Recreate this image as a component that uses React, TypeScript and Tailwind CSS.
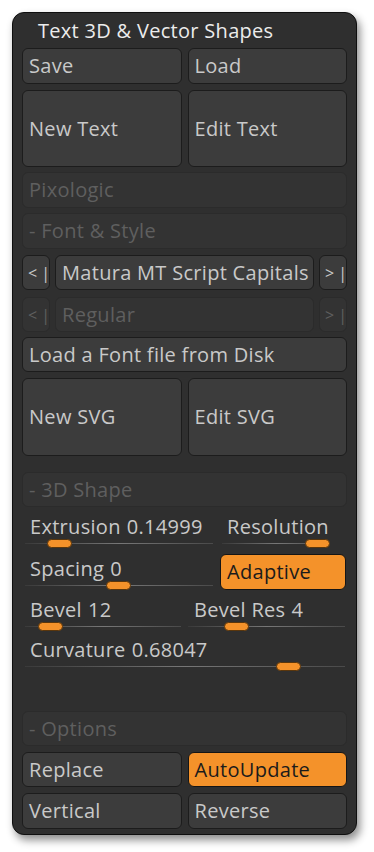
import React from 'react';

type BtnProps = {
  label: string;
  className?: string;
  dim?: boolean;
  on?: boolean;
  small?: boolean;
};

const Btn = ({ label, className = '', dim = false, on = false, small = false }: BtnProps) => {
  const tone = on
    ? 'bg-[#f4922a] border-[#151515] text-[#1b1b1b]'
    : dim
      ? 'bg-[#333333] border-[#2b2b2b] text-[#5f5f5f]'
      : 'bg-[#3c3c3c] border-[#1c1c1c] text-[#c9c9c9]';
  const size = small ? 'text-[16px] pl-[5px]' : 'text-[20px] tracking-[0.3px] pl-[6px]';
  return (
    <div
      className={`flex items-center overflow-hidden whitespace-nowrap rounded-[6px] border ${size} ${tone} ${className}`}
    >
      {label}
    </div>
  );
};

type SliderProps = {
  label: string;
  value?: string;
  width: number;
  pl: number;
  lineLeft: number;
  lineWidth: number;
  knob: number;
};

const Slider = ({ label, value, width, pl, lineLeft, lineWidth, knob }: SliderProps) => (
  <div className="flex flex-col shrink-0" style={{ width }}>
    <div className="h-[22px] leading-[22px] text-[20px] tracking-[0.3px] text-[#c9c9c9] whitespace-nowrap" style={{ paddingLeft: pl }}>
      {label}
      {value && <span className="ml-[6px]">{value}</span>}
    </div>
    <div className="relative h-[10px]">
      <div
        className="absolute top-[5px] h-px bg-gradient-to-r from-[#3a3a3a] via-[#777777] to-[#4a4a4a]"
        style={{ left: lineLeft, width: lineWidth }}
      />
      <div
        className="absolute top-px h-[9px] w-[25px] rounded-full border border-[#5a360c] bg-[#f4922a]"
        style={{ left: knob }}
      />
    </div>
  </div>
);

export default function App() {
  return (
    <div className="min-h-[852px] bg-white pt-[12px] pl-[12px]" style={{ fontFamily: '"Open Sans", "Noto Sans", sans-serif' }}>
      <div className="w-[345px] h-[823px] rounded-[12px] border border-[#0f0f0f] bg-[#2f2f2f] px-[9px] shadow-[3px_5px_8px_rgba(0,0,0,0.45)]">
        {/* Title */}
        <div className="h-[35px] leading-[36px] pl-[16px] text-[20px] tracking-[0.3px] text-[#ececec]">
          Text 3D &amp; Vector Shapes
        </div>

        <div className="grid grid-cols-2 gap-x-[6px] gap-y-[6px]">
          <Btn label="Save" className="h-[36px]" />
          <Btn label="Load" className="h-[36px]" />
          <Btn label="New Text" className="h-[77px]" />
          <Btn label="Edit Text" className="h-[77px]" />
        </div>

        <Btn label="Pixologic" dim className="mt-[5px] h-[36px]" />
        <Btn label="- Font & Style" dim className="mt-[5px] h-[36px]" />

        <div className="mt-[6px] flex gap-[5px] h-[35px]">
          <Btn label="< |" small className="w-[28px] shrink-0" />
          <Btn label="Matura MT Script Capitals" className="flex-1" />
          <Btn label="> |" small className="w-[28px] shrink-0" />
        </div>
        <div className="mt-[7px] flex gap-[5px] h-[35px]">
          <Btn label="< |" small dim className="w-[28px] shrink-0" />
          <Btn label="Regular" dim className="flex-1" />
          <Btn label="> |" small dim className="w-[28px] shrink-0" />
        </div>

        <Btn label="Load a Font file from Disk" className="mt-[5px] h-[35px]" />

        <div className="mt-[6px] grid grid-cols-2 gap-x-[6px]">
          <Btn label="New SVG" className="h-[78px]" />
          <Btn label="Edit SVG" className="h-[78px]" />
        </div>

        <Btn label="- 3D Shape" dim className="mt-[16px] h-[35px]" />

        {/* Sliders */}
        <div className="mt-[9px] flex gap-[5px]">
          <Slider label="Extrusion" value="0.14999" width={193} pl={8} lineLeft={3} lineWidth={188} knob={25} />
          <Slider label="Resolution" width={112} pl={7} lineLeft={2} lineWidth={108} knob={85} />
        </div>

        <div className="mt-[6px] flex gap-[5px] items-end">
          <Slider label="Spacing" value="0" width={193} pl={8} lineLeft={3} lineWidth={188} knob={84} />
          <Btn label="Adaptive" on className="h-[36px] w-[126px]" />
        </div>

        <div className="mt-[9px] flex gap-[6px]">
          <Slider label="Bevel" value="12" width={160} pl={8} lineLeft={3} lineWidth={156} knob={16} />
          <Slider label="Bevel Res" value="4" width={159} pl={6} lineLeft={0} lineWidth={157} knob={36} />
        </div>

        <div className="mt-[8px]">
          <Slider label="Curvature" value="0.68047" width={325} pl={8} lineLeft={3} lineWidth={320} knob={254} />
        </div>

        <Btn label="- Options" dim className="mt-[40px] h-[35px]" />

        <div className="mt-[6px] grid grid-cols-2 gap-x-[6px] gap-y-[6px]">
          <Btn label="Replace" className="h-[35px]" />
          <Btn label="AutoUpdate" on className="h-[35px]" />
          <Btn label="Vertical" className="h-[36px]" />
          <Btn label="Reverse" className="h-[36px]" />
        </div>
      </div>
    </div>
  );
}
